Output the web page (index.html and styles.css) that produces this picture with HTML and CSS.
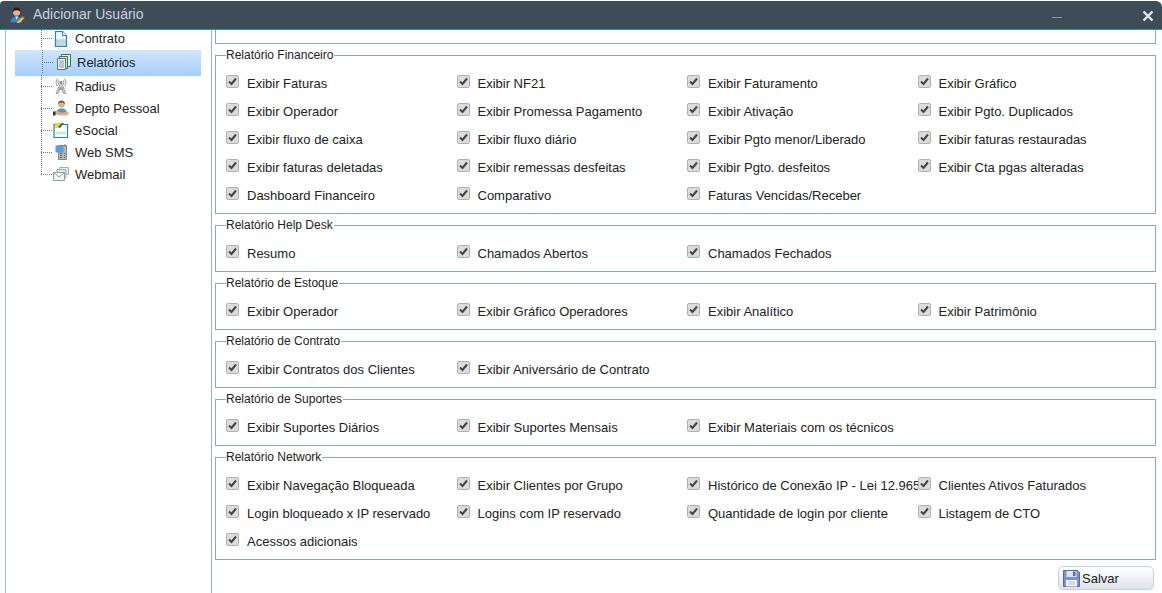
FILE: index.html
```html
<!DOCTYPE html>
<html lang="pt-br">

<head>
    <meta charset="UTF-8">
    <meta name="viewport" content="width=device-width, initial-scale=1.0">
    <title>Adicionar Usuário</title>
    <link rel="stylesheet" href="styles.css">
</head>

<body>
    <div class="janela">
        <!-- Barra de título -->
        <div class="titulo">
            <svg class="titulo-icone" width="16" height="16" viewBox="0 0 20 20">
                <path d="M2 19c0-4 3-7 7.500-7s7 3 7 7z" fill="#3f86c8"/>
                <path d="M8 12l1.500 4 1.500-4z" fill="#fff"/>
                <circle cx="9.500" cy="6.500" r="4.500" fill="#e9b48c"/>
                <path d="M5 7C4 2.500 6.500.5 9.500.5S15 2.500 14 7c-.5-2-1.500-3-4.500-3S5.500 5 5 7z" fill="#2e1c12"/>
                <path d="M10 19l7-7 2 2-7 7-3 .5z" fill="#f0c832"/>
                <path d="M16.500 12.500l1.500-1.500 2 2-1.500 1.500z" fill="#d83c3c"/>
            </svg>
            <span class="titulo-texto">Adicionar Usuário</span>
            <span class="minimizar"></span>
            <svg class="fechar" width="12" height="12" viewBox="0 0 12 12">
                <path d="M1.500 1.500l9 9M10.500 1.500l-9 9" stroke="#e4e8ea" stroke-width="2.400"/>
            </svg>
        </div>

        <div class="corpo">
            <!-- Árvore de menus -->
            <ul class="arvore">
                <li class="item item-primeiro">
                    <span class="galho"></span>
                    <svg class="icone" width="16" height="16" viewBox="0 0 16 16">
                        <path d="M2.500.5h7l4 4v11h-11z" fill="#bcd9e9" stroke="#2c83b8" stroke-width="1.200"/>
                        <path d="M3.200 1.200h5.800v4h3.800v3H3.200z" fill="#f4f9fc"/>
                        <path d="M9.500.5v4h4" fill="#fff" stroke="#2c83b8"/>
                    </svg>
                    Contrato
                </li>
                <li class="item item-ativo">
                    <span class="galho"></span>
                    <svg class="icone" width="16" height="16" viewBox="0 0 16 16">
                        <path d="M5.500.5h9v12h-9z" fill="#e8f2ea" stroke="#2f7d4c"/>
                        <path d="M3.500 2.500h8v12h-8z" fill="#cfe3d5" stroke="#2f7d4c"/>
                        <path d="M1.500 4.500h8v11h-8z" fill="#fff" stroke="#3d7f70"/>
                        <path d="M3 7h5M3 9h5M3 11h5M3 13h5" stroke="#6a8fa8"/>
                    </svg>
                    Relatórios
                </li>
                <li class="item">
                    <span class="galho"></span>
                    <svg class="icone" width="16" height="16" viewBox="0 0 16 16">
                        <path d="M7.500 5L3 15.500h2.500L8 9l2.500 6.500H13L8.500 5z" fill="#d4d6d9" stroke="#8f9296" stroke-width=".8"/>
                        <path d="M5.500 12l5-2.500M10.500 12l-5-2.500" fill="none" stroke="#8f9296"/>
                        <path d="M4.500 1a5 5 0 0 0 0 7M11.500 1a5 5 0 0 1 0 7M6 2.500a2.800 2.800 0 0 0 0 4M10 2.500a2.800 2.800 0 0 1 0 4" fill="none" stroke="#a3a6aa" stroke-width="1.100"/>
                        <circle cx="8" cy="4.500" r="1.400" fill="#85888c"/>
                    </svg>
                    Radius
                </li>
                <li class="item">
                    <span class="galho"></span>
                    <svg class="icone" width="16" height="16" viewBox="0 0 16 16">
                        <path d="M3 14c0-3.500 2-5.500 5.500-5.500S14 10.500 14 14z" fill="#5a94c4"/>
                        <circle cx="8.500" cy="4.500" r="3.200" fill="#e5ad84"/>
                        <path d="M5 4.500C5 1.500 6.500.5 8.500.5S12 1.500 12 4.500C11 3 10 2.500 8.500 2.500S6 3 5 4.500z" fill="#3c6f3c"/>
                        <path d="M1 11h3l3 1.500h4l4-1 1 1.500-2 2.500H6l-3-1H1z" fill="#e5ad84"/>
                        <path d="M0 11.500h2.500v4H0z" fill="#26324a"/>
                    </svg>
                    Depto Pessoal
                </li>
                <li class="item">
                    <span class="galho"></span>
                    <svg class="icone" width="16" height="16" viewBox="0 0 16 16">
                        <path d="M1 2.500h13.500v13H1z" fill="#fff" stroke="#1f9463" stroke-width="1.200"/>
                        <path d="M2 1l7 0-4 5-3 0z" fill="#f4d224"/>
                        <path d="M5 5l4-4h2L7 6z" fill="#1f5fa8"/>
                        <path d="M3 9.500h10v3H3z" fill="#cfe3ee"/>
                    </svg>
                    eSocial
                </li>
                <li class="item">
                    <span class="galho"></span>
                    <svg class="icone" width="16" height="16" viewBox="0 0 16 16">
                        <path d="M5.500 1.500h8v14h-8z" fill="#b4b8ba" stroke="#85898c"/>
                        <path d="M2.500 1.500h8v7h-8z" fill="#5b9ddf"/>
                        <path d="M7 9.500h2M11 9.500h1M7 11.500h2M11 11.500h1M7 13.500h2M11 13.500h1" stroke="#62666a"/>
                        <path d="M11 .5h1.500v1H11z" fill="#6b6f72"/>
                    </svg>
                    Web SMS
                </li>
                <li class="item item-ultimo">
                    <span class="galho"></span>
                    <svg class="icone" width="16" height="16" viewBox="0 0 16 16">
                        <path d="M6.500 1.500h9v7h-9z" fill="#e6ecea" stroke="#a3b0ac"/>
                        <path d="M4 3.500h9v8H4z" fill="#e0e7e4" stroke="#a3b0ac"/>
                        <path d="M.5 6.500h11v8H.5z" fill="#f0f4f2" stroke="#8f9f9a"/>
                        <path d="M.5 6.500L6 11l5.500-4.500" fill="none" stroke="#8f9f9a"/>
                    </svg>
                    Webmail
                </li>
            </ul>

            <!-- Grupos de permissões -->
            <div class="painel">
                <div class="grupo-cortado"></div>

                <fieldset class="grupo">
                    <legend>Relatório Financeiro</legend>
                    <div class="opcoes">
                        <label class="opcao"><input type="checkbox" checked>Exibir Faturas</label>
                        <label class="opcao"><input type="checkbox" checked>Exibir NF21</label>
                        <label class="opcao"><input type="checkbox" checked>Exibir Faturamento</label>
                        <label class="opcao"><input type="checkbox" checked>Exibir Gráfico</label>
                        <label class="opcao"><input type="checkbox" checked>Exibir Operador</label>
                        <label class="opcao"><input type="checkbox" checked>Exibir Promessa Pagamento</label>
                        <label class="opcao"><input type="checkbox" checked>Exibir Ativação</label>
                        <label class="opcao"><input type="checkbox" checked>Exibir Pgto. Duplicados</label>
                        <label class="opcao"><input type="checkbox" checked>Exibir fluxo de caixa</label>
                        <label class="opcao"><input type="checkbox" checked>Exibir fluxo diário</label>
                        <label class="opcao"><input type="checkbox" checked>Exibir Pgto menor/Liberado</label>
                        <label class="opcao"><input type="checkbox" checked>Exibir faturas restauradas</label>
                        <label class="opcao"><input type="checkbox" checked>Exibir faturas deletadas</label>
                        <label class="opcao"><input type="checkbox" checked>Exibir remessas desfeitas</label>
                        <label class="opcao"><input type="checkbox" checked>Exibir Pgto. desfeitos</label>
                        <label class="opcao"><input type="checkbox" checked>Exibir Cta pgas alteradas</label>
                        <label class="opcao"><input type="checkbox" checked>Dashboard Financeiro</label>
                        <label class="opcao"><input type="checkbox" checked>Comparativo</label>
                        <label class="opcao"><input type="checkbox" checked>Faturas Vencidas/Receber</label>
                    </div>
                </fieldset>

                <fieldset class="grupo">
                    <legend>Relatório Help Desk</legend>
                    <div class="opcoes">
                        <label class="opcao"><input type="checkbox" checked>Resumo</label>
                        <label class="opcao"><input type="checkbox" checked>Chamados Abertos</label>
                        <label class="opcao"><input type="checkbox" checked>Chamados Fechados</label>
                    </div>
                </fieldset>

                <fieldset class="grupo">
                    <legend>Relatório de Estoque</legend>
                    <div class="opcoes">
                        <label class="opcao"><input type="checkbox" checked>Exibir Operador</label>
                        <label class="opcao"><input type="checkbox" checked>Exibir Gráfico Operadores</label>
                        <label class="opcao"><input type="checkbox" checked>Exibir Analítico</label>
                        <label class="opcao"><input type="checkbox" checked>Exibir Patrimônio</label>
                    </div>
                </fieldset>

                <fieldset class="grupo">
                    <legend>Relatório de Contrato</legend>
                    <div class="opcoes">
                        <label class="opcao"><input type="checkbox" checked>Exibir Contratos dos Clientes</label>
                        <label class="opcao"><input type="checkbox" checked>Exibir Aniversário de Contrato</label>
                    </div>
                </fieldset>

                <fieldset class="grupo">
                    <legend>Relatório de Suportes</legend>
                    <div class="opcoes">
                        <label class="opcao"><input type="checkbox" checked>Exibir Suportes Diários</label>
                        <label class="opcao"><input type="checkbox" checked>Exibir Suportes Mensais</label>
                        <label class="opcao"><input type="checkbox" checked>Exibir Materiais com os técnicos</label>
                    </div>
                </fieldset>

                <fieldset class="grupo">
                    <legend>Relatório Network</legend>
                    <div class="opcoes">
                        <label class="opcao"><input type="checkbox" checked>Exibir Navegação Bloqueada</label>
                        <label class="opcao"><input type="checkbox" checked>Exibir Clientes por Grupo</label>
                        <label class="opcao"><input type="checkbox" checked>Histórico de Conexão IP - Lei 12.965</label>
                        <label class="opcao"><input type="checkbox" checked>Clientes Ativos Faturados</label>
                        <label class="opcao"><input type="checkbox" checked>Login bloqueado x IP reservado</label>
                        <label class="opcao"><input type="checkbox" checked>Logins com IP reservado</label>
                        <label class="opcao"><input type="checkbox" checked>Quantidade de login por cliente</label>
                        <label class="opcao"><input type="checkbox" checked>Listagem de CTO</label>
                        <label class="opcao"><input type="checkbox" checked>Acessos adicionais</label>
                    </div>
                </fieldset>

                <div class="rodape">
                    <button class="salvar" type="button">
                        <svg width="17" height="17" viewBox="0 0 17 17">
                            <path d="M.5.5h14l2 2v14H.5z" fill="#7f8fd8" stroke="#5a68b0"/>
                            <path d="M3.500 1h10v6h-10z" fill="#dfe5f6"/>
                            <path d="M10 1.500h2.500v4.500H10z" fill="#5a68b0"/>
                            <path d="M3 10h11v6.500H3z" fill="#f4f6fc"/>
                            <path d="M5 12h7M5 14h7" stroke="#b4bce0"/>
                        </svg>
                        Salvar
                    </button>
                </div>
            </div>
        </div>
    </div>
</body>

</html>
```

FILE: styles.css
```css
html,
body {
    margin: 0;
    height: 100%;
    overflow: hidden;
    background-color: #fff;
}

body {
    font-family: "Liberation Sans", Arial, sans-serif;
    font-size: 13px;
    color: #222;
}

.janela {
    display: flex;
    flex-direction: column;
    height: 100%;
    padding-top: 1px;
    box-sizing: border-box;
}

.titulo {
    display: flex;
    align-items: center;
    flex: 0 0 auto;
    height: 28px;
    padding: 0 8px 0 9px;
    background-color: #3e4c58;
    border-bottom: 1px solid #2b93a9;
    border-radius: 4px 6px 0 0;
}

.titulo-icone {
    margin-bottom: 1px;
}

.titulo-texto {
    margin-left: 8px;
    margin-bottom: 2px;
    font-size: 14px;
    color: #c6d2dc;
}

.minimizar {
    width: 10px;
    height: 1px;
    margin-left: auto;
    margin-top: 4px;
    background-color: #8d979f;
}

.fechar {
    margin-left: 80px;
    margin-top: 2px;
}

.corpo {
    display: flex;
    flex: 1 1 auto;
    min-height: 0;
}

/* arvore da esquerda */
.arvore {
    flex: 0 0 207px;
    box-sizing: border-box;
    margin: 0 0 0 5px;
    padding: 0 10px 0 9px;
    list-style: none;
    border-left: 1px solid #a9bccf;
    border-right: 1px solid #9db0c4;
}

.item {
    display: flex;
    align-items: center;
    height: 22px;
    padding-left: 26px;
}

.item-primeiro {
    height: 17px;
    padding-bottom: 3px;
}

.item-ativo {
    height: 26px;
    margin-bottom: -1px;
    padding-left: 27px;
    padding-bottom: 2px;
    box-sizing: border-box;
    background: linear-gradient(to bottom, #d0e6fe, #a6cefd);
}

.galho {
    align-self: stretch;
    flex: 0 0 12px;
    background:
        repeating-linear-gradient(to bottom, #777 0 1px, transparent 1px 2px) left top / 1px 100% no-repeat,
        repeating-linear-gradient(to right, #777 0 1px, transparent 1px 2px) left center / 100% 1px no-repeat;
}

.item-ultimo .galho {
    background-size: 1px 50%, 100% 1px;
}

.icone {
    flex: 0 0 16px;
    margin-right: 6px;
}

.item-ativo .icone {
    margin-left: 2px;
    margin-right: 5px;
}

/* grupos de permissoes */
.painel {
    flex: 1 1 auto;
    min-width: 0;
    padding: 0 6px 0 3px;
}

.grupo-cortado {
    height: 13px;
    margin-bottom: 4px;
    border: 1px solid #8fa6bf;
    border-top: none;
}

.grupo {
    margin: 0 0 4px;
    padding: 7px 7px 4px 10px;
    border: 1px solid #8fa6bf;
    min-width: 0;
}

.grupo legend {
    padding: 0 1px 0 0;
    font-size: 12px;
    line-height: 14px;
}

.opcoes {
    display: grid;
    grid-template-columns: repeat(4, 1fr);
    grid-auto-rows: 28px;
}

.opcao {
    display: flex;
    align-items: center;
    overflow: hidden;
    white-space: nowrap;
}

.opcao input {
    appearance: none;
    flex: 0 0 13px;
    width: 13px;
    height: 13px;
    margin: -4px 8px 0 0;
    border: 1px solid #b0b0b0;
    border-radius: 2px;
    background: #dcdcdc url("data:image/svg+xml,%3Csvg xmlns='http://www.w3.org/2000/svg' width='11' height='11'%3E%3Cpath d='M2 5.500l2.500 2.500L9 2.500' fill='none' stroke='%23444' stroke-width='2'/%3E%3C/svg%3E") center no-repeat;
}

.rodape {
    display: flex;
    justify-content: flex-end;
    padding: 2px 2px 0 0;
}

.salvar {
    display: flex;
    align-items: center;
    gap: 2px;
    box-sizing: border-box;
    width: 96px;
    height: 24px;
    padding: 0 0 0 4px;
    font-family: inherit;
    font-size: 13px;
    color: #222;
    border: 1px solid #c3d2e0;
    border-radius: 5px;
    background: linear-gradient(to bottom, #fff, #dfe4ea);
}
```
